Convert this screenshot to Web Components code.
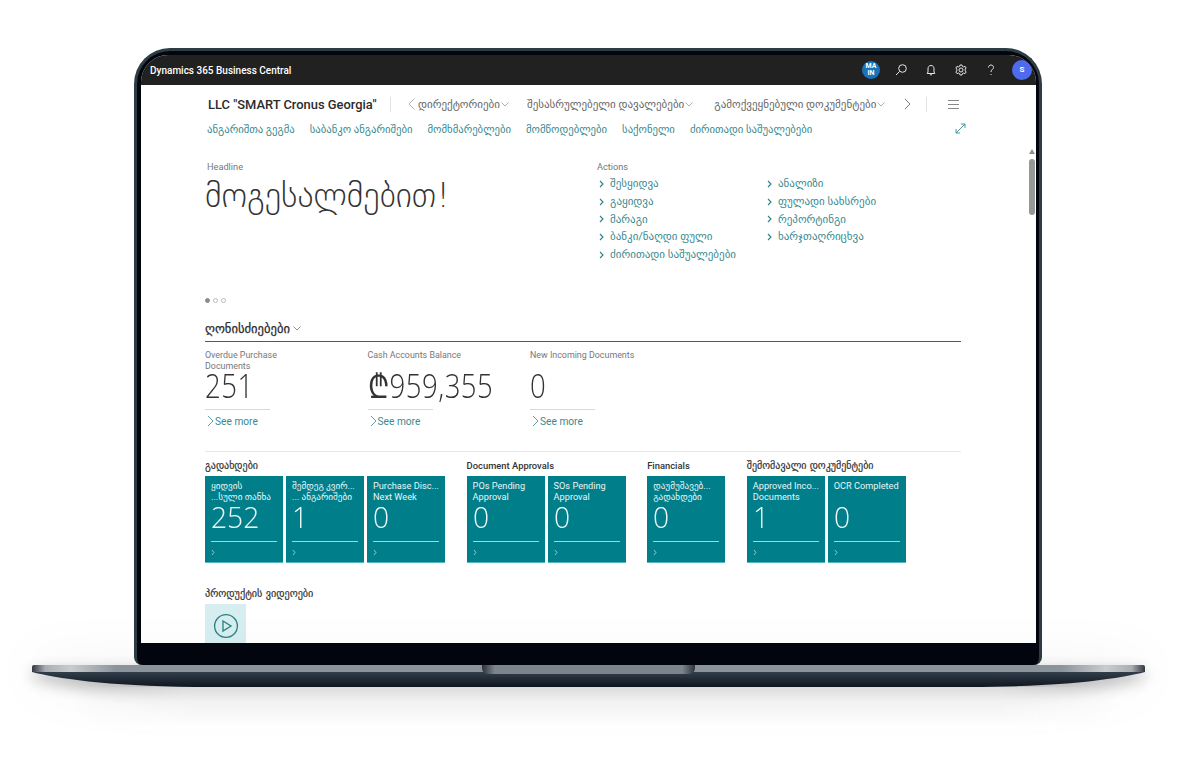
<!DOCTYPE html>
<html lang="ka">
<head>
<meta charset="utf-8">
<title>Business Central</title>
<style>
  html, body { margin: 0; background: #fff; }
  body { font-family: "Open Sans", "DejaVu Sans", sans-serif; width: 1188px; height: 768px; overflow: hidden; }
</style>
</head>
<body>
<bc-laptop>
  <bc-topbar></bc-topbar>
  <bc-nav></bc-nav>
  <bc-headline></bc-headline>
  <bc-activities></bc-activities>
</bc-laptop>

<script>
const GE = `"Roboto", "DejaVu Sans", sans-serif`;
const TEAL = "#3a8a90";

const isGeorgian = (s) => /[\u10A0-\u10FF]/.test(s);

const chevron = (w, h, color, sw) =>
    `<svg width="${w}" height="${h}" viewBox="0 0 ${w} ${h}" fill="none" stroke="${color}" stroke-width="${sw}"><path d="M1 1 L${w - 1} ${h / 2} L1 ${h - 1}"/></svg>`;
const chevronDown = (color) =>
    `<svg width="8" height="5" viewBox="0 0 8 5" fill="none" stroke="${color}" stroke-width=".8"><path d="M.5 .5 L4 4 L7.5 .5"/></svg>`;

// Laptop body: lid with the screen slotted in it, base drawn below
class BcLaptop extends HTMLElement {
    constructor() {
        super();
        this.attachShadow({ mode: "open" });
        this.shadowRoot.innerHTML = `
            <style>
                :host { display: block; padding-top: 48px; position: relative; }
                .lid {
                    box-sizing: border-box;
                    width: 908px;
                    height: 617px;
                    margin-left: 134px;
                    padding: 4px 3px 22px 4px;
                    background: #03060f;
                    border: 3px solid #2e3c44;
                    border-bottom: 0;
                    border-radius: 36px 36px 8px 8px;
                }
                .screen {
                    position: relative;
                    height: 588px;
                    background: #fff;
                    border-radius: 27px 27px 0 0;
                    overflow: hidden;
                }
                .thumb {
                    position: absolute;
                    right: 1px;
                    top: 104px;
                    width: 6px;
                    height: 56px;
                    border-radius: 3px;
                    background: #979797;
                }
                .arrow {
                    position: absolute;
                    right: 1px;
                    top: 94px;
                    width: 0;
                    height: 0;
                    border: 3px solid transparent;
                    border-bottom: 5px solid #8f8f8f;
                    border-top: 0;
                }
                .base {
                    display: block;
                    margin-left: 32px;
                    filter: drop-shadow(0 6px 8px rgba(0,0,0,.3)) drop-shadow(0 0 26px rgba(0,0,0,.07));
                }
                .glow {
                    height: 42px;
                    background: linear-gradient(#dcdcdc, #f2f2f2 35%, #fff);
                    -webkit-mask-image: linear-gradient(to right, transparent 6%, #000 16%, #000 84%, transparent 94%);
                    mask-image: linear-gradient(to right, transparent 6%, #000 16%, #000 84%, transparent 94%);
                }
            </style>
            <div class="lid">
                <div class="screen">
                    <slot></slot>
                    <div class="arrow"></div>
                    <div class="thumb"></div>
                </div>
            </div>
            <svg class="base" width="1113" height="22" viewBox="0 0 1113 22">
                <defs>
                    <linearGradient id="band" x1="0" x2="1" y1="0" y2="0">
                        <stop offset="0" stop-color="#30363d"/>
                        <stop offset=".012" stop-color="#a9aeb2"/>
                        <stop offset=".035" stop-color="#c9cccf"/>
                        <stop offset=".075" stop-color="#8c949b"/>
                        <stop offset=".925" stop-color="#8c949b"/>
                        <stop offset=".965" stop-color="#c9cccf"/>
                        <stop offset=".988" stop-color="#a9aeb2"/>
                        <stop offset="1" stop-color="#30363d"/>
                    </linearGradient>
                    <linearGradient id="under" x1="0" x2="0" y1="0" y2="1">
                        <stop offset="0" stop-color="#313e4a"/>
                        <stop offset="1" stop-color="#0f1620"/>
                    </linearGradient>
                    <linearGradient id="notch" x1="0" x2="1" y1="0" y2="0">
                        <stop offset="0" stop-color="#2c3239"/>
                        <stop offset=".06" stop-color="#7d858c"/>
                        <stop offset=".94" stop-color="#7d858c"/>
                        <stop offset="1" stop-color="#2c3239"/>
                    </linearGradient>
                </defs>
                <path d="M0 7 H1113 C1090 13 1040 21 950 22 H163 C73 21 23 13 0 7Z" fill="url(#under)"/>
                <path d="M2 0 H1111 Q1113 0 1113 2 V7 H0 V2 Q0 0 2 0Z" fill="url(#band)"/>
                <path d="M450 0 H663 V3 Q663 9 655 9 H458 Q450 9 450 3Z" fill="url(#notch)"/>
            </svg>
            <div class="glow"></div>`;
    }
}

// Black title bar with product name and the app icons
class BcTopbar extends HTMLElement {
    constructor() {
        super();
        this.attachShadow({ mode: "open" });
        this.shadowRoot.innerHTML = `
            <style>
                :host {
                    display: flex;
                    align-items: center;
                    height: 30px;
                    background: #212121;
                    color: #fff;
                    padding-left: 9px;
                    padding-right: 4px;
                }
                .name { font: 500 10px "Roboto", sans-serif; flex: 1; }
                .icons { display: flex; align-items: center; gap: 14px; }
                .icons svg { display: block; width: 16px; height: 16px; fill: none; stroke: #e6e6e6; stroke-width: 1; }
                .ma {
                    width: 18px; height: 18px; border-radius: 50%;
                    background: #1a73b8;
                    font: 700 7px/7px "Roboto", sans-serif;
                    text-align: center;
                    display: flex; align-items: center; justify-content: center;
                    margin-right: -1px;
                }
                .user {
                    width: 20px; height: 20px; border-radius: 50%;
                    background: #4f6bed;
                    font: 700 8px/20px "Roboto", sans-serif;
                    text-align: center;
                    margin-left: -1px;
                }
            </style>
            <div class="name">Dynamics 365 Business Central</div>
            <div class="icons">
                <div class="ma">MA<br>IN</div>
                <svg viewBox="0 0 16 16"><circle cx="9.5" cy="6.5" r="3.8"/><path d="M6.7 9.3 L3 13"/></svg>
                <svg viewBox="0 0 16 16"><path d="M8 3.5 C5.8 3.5 5 5 5 7 V10 L4.2 11.5 H11.8 L11 10 V7 C11 5 10.2 3.5 8 3.5Z"/><path d="M7 12.8 H9"/></svg>
                <svg viewBox="0 0 16 16"><circle cx="8" cy="8" r="2"/><path d="M7 3 H9 L9.4 4.4 L10.7 5 L12 4.3 L13.2 6 L12.2 7 V8.9 L13.2 10 L12 11.7 L10.7 11 L9.4 11.6 L9 13 H7 L6.6 11.6 L5.3 11 L4 11.7 L2.8 10 L3.8 8.9 V7 L2.8 6 L4 4.3 L5.3 5 L6.6 4.4Z"/></svg>
                <svg viewBox="0 0 16 16"><path d="M5.5 5.5 C5.5 3.8 6.7 3 8 3 C9.4 3 10.5 3.9 10.5 5.3 C10.5 7.4 8 7.4 8 10"/><path d="M8 12 V13"/></svg>
                <div class="user">S</div>
            </div>`;
    }
}

// Company name with the two menu rows
class BcNav extends HTMLElement {
    constructor() {
        super();
        this.attachShadow({ mode: "open" });
        this.shadowRoot.innerHTML = `
            <style>
                :host { display: block; padding: 8px 0 0 67px; }
                .row1 { display: flex; align-items: center; height: 22px; color: #666; }
                .title { font: 500 12.9px "Roboto", sans-serif; color: #2b2b2b; width: 182px; white-space: nowrap; }
                .sep { width: 1px; height: 15px; background: #e2e2e2; }
                .back { margin: 0 3px 0 17px; display: flex; }
                .item { font: 11px ${GE}; display: flex; align-items: center; gap: 1px; white-space: nowrap; }
                .item + .item { margin-left: 18px; }
                .item + .item + .item { margin-left: 21px; }
                .next { margin: 0 15px 0 19px; display: flex; }
                .burger { margin-left: 21px; width: 11px; height: 7px; border-top: 1px solid #888; border-bottom: 1px solid #888; position: relative; }
                .burger::after { content: ""; position: absolute; left: 0; right: 0; top: 3px; border-top: 1px solid #888; }
                .row2 { display: flex; align-items: center; gap: 15px; height: 17px; margin: 6px 70px 0 -1px; font: 10.7px ${GE}; color: ${TEAL}; white-space: nowrap; }
                .row2 svg { margin-left: auto; margin-top: -2px; }
            </style>
            <div class="row1">
                <div class="title">LLC "SMART Cronus Georgia"</div>
                <div class="sep"></div>
                <div class="back"><svg width="7" height="12" viewBox="0 0 7 12" fill="none" stroke="#aaa" stroke-width=".9"><path d="M6.5 .5 L1 6 L6.5 11.5"/></svg></div>
                <div class="item">დირექტორიები ${chevronDown("#999")}</div>
                <div class="item">შესასრულებელი დავალებები ${chevronDown("#999")}</div>
                <div class="item">გამოქვეყნებული დოკუმენტები ${chevronDown("#999")}</div>
                <div class="next">${chevron(7, 12, "#666", .9)}</div>
                <div class="sep"></div>
                <div class="burger"></div>
            </div>
            <div class="row2">
                <span>ანგარიშთა გეგმა</span>
                <span>საბანკო ანგარიშები</span>
                <span>მომხმარებლები</span>
                <span>მომწოდებლები</span>
                <span>საქონელი</span>
                <span>ძირითადი საშუალებები</span>
                <svg width="11" height="11" viewBox="0 0 11 11" fill="none" stroke="${TEAL}" stroke-width=".9"><path d="M1 10 L10 1 M6 1 H10 V5 M1 6 V10 H5"/></svg>
            </div>`;
    }
}

// Headline part with the greeting on the left and action links on the right
class BcHeadline extends HTMLElement {
    constructor() {
        super();
        this.attachShadow({ mode: "open" });
        const link = (t) => `<div class="link">${chevron(5, 8, "#2f8288", 1.1)}<span>${t}</span></div>`;
        this.shadowRoot.innerHTML = `
            <style>
                :host { display: flex; height: 180px; padding: 22px 0 0 64px; box-sizing: border-box; position: relative; }
                .left { width: 392px; }
                .cap { font: 9.2px/13px "Roboto", sans-serif; color: #777; margin-left: 2px; height: 13px; }
                .hello { font: 200 34.3px/38px "DejaVu Sans", sans-serif; color: #333; margin-top: 3px; white-space: nowrap; }
                .dots { position: absolute; left: 64px; top: 160px; display: flex; gap: 3px; }
                .dots i { width: 5px; height: 5px; box-sizing: border-box; border-radius: 50%; border: 1px solid #bbb; }
                .dots i:first-child { background: #8a8a8a; border-color: #8a8a8a; }
                .cols { display: flex; margin-top: 2px; margin-left: 2px; }
                .col { width: 168px; }
                .link { display: flex; align-items: center; gap: 6px; height: 17.7px; font: 11px ${GE}; color: ${TEAL}; white-space: nowrap; }
            </style>
            <div class="left">
                <div class="cap">Headline</div>
                <div class="hello">მოგესალმებით!</div>
                <div class="dots"><i></i><i></i><i></i></div>
            </div>
            <div>
                <div class="cap" style="margin-left:0">Actions</div>
                <div class="cols">
                    <div class="col">
                        ${link("შესყიდვა")}${link("გაყიდვა")}${link("მარაგი")}${link("ბანკი/ნაღდი ფული")}${link("ძირითადი საშუალებები")}
                    </div>
                    <div class="col">
                        ${link("ანალიზი")}${link("ფულადი სახსრები")}${link("რეპორტინგი")}${link("ხარჯთაღრიცხვა")}
                    </div>
                </div>
            </div>`;
    }
}

// One KPI: caption, big number, short rule, See more
class BcCue extends HTMLElement {
    constructor() {
        super();
        this.attachShadow({ mode: "open" });
        this.shadowRoot.innerHTML = `
            <style>
                :host { display: block; width: 162.5px; }
                .cap { font: 8.9px/11px "Roboto", sans-serif; color: #777; height: 22px; width: 90px; white-space: normal; }
                :host([wide]) .cap { width: 140px; }
                .num { font: 300 30px/28px "Open Sans", "DejaVu Sans", sans-serif; letter-spacing: .5px; color: #333; white-space: nowrap; transform: scale(.92, 1.12); transform-origin: left center; }
                .rule { width: 65px; border-top: 1px solid #d9d9d9; margin-top: 9px; }
                .more { display: flex; align-items: center; gap: 1px; height: 22px; margin-left: 2px; font: 10.2px "Roboto", sans-serif; color: ${TEAL}; }
            </style>
            <div class="cap">${this.getAttribute("label")}</div>
            <div class="num">${this.getAttribute("value")}</div>
            <div class="rule"></div>
            <div class="more">${chevron(7, 12, "#3a8a90", .8)}<span>See more</span></div>`;
    }
}

// Teal tile
class BcTile extends HTMLElement {
    constructor() {
        super();
        this.attachShadow({ mode: "open" });
        const label = this.getAttribute("label");
        const lines = label.split("|");
        this.shadowRoot.innerHTML = `
            <style>
                :host {
                    display: block;
                    box-sizing: border-box;
                    width: 78px;
                    height: 87px;
                    padding: 5px 6px 0;
                    background: #007f8b;
                    border-bottom: 1px solid #55b6bf;
                    color: #e6f6f7;
                }
                .lab { font: 9.2px/10.5px ${GE}; height: 21px; white-space: nowrap; }
                .num { font: 300 30px/30px "Open Sans", sans-serif; color: #eefafa; height: 30px; transform: scaleX(.94); transform-origin: left center; }
                .rule { border-top: 1px solid #9fd8dc; margin-top: 9px; }
                .go { margin-top: 7px; display: flex; }
            </style>
            <div class="lab">${lines.join("<br>")}</div>
            <div class="num">${this.getAttribute("value")}</div>
            <div class="rule"></div>
            <div class="go">${chevron(4, 7, "#a8dde0", .8)}</div>`;
    }
}

// Titled group of tiles
class BcTileGroup extends HTMLElement {
    constructor() {
        super();
        this.attachShadow({ mode: "open" });
        const title = this.getAttribute("title");
        this.shadowRoot.innerHTML = `
            <style>
                :host { display: block; }
                .t { font: 500 9.4px/14px "Roboto", sans-serif; color: #333; height: 14px; margin-bottom: 3px; white-space: nowrap; }
                .t.ge { font: 400 10px/14px "DejaVu Sans", sans-serif; -webkit-text-stroke: .2px #333; }
                .tiles { display: flex; gap: 3px; }
            </style>
            <div class="t ${isGeorgian(title) ? "ge" : ""}">${title}</div>
            <div class="tiles"><slot></slot></div>`;
    }
}

// Lower part of the role center
class BcActivities extends HTMLElement {
    constructor() {
        super();
        this.attachShadow({ mode: "open" });
        this.shadowRoot.innerHTML = `
            <style>
                :host { display: block; padding: 0 75px 0 64px; }
                .head { display: flex; align-items: center; gap: 3px; height: 20px; font: 400 12.6px "DejaVu Sans", sans-serif; -webkit-text-stroke: .25px #2b2b2b; color: #2b2b2b; border-bottom: 1px solid #55566c; padding-bottom: 3px; }
                .cues { display: flex; padding-top: 8px; height: 101px; border-bottom: 1px solid #e6e6e6; }
                .groups { display: flex; gap: 21.6px; padding-top: 7px; }
                .vid { margin-top: 24px; }
                .vid .t { font: 400 10.2px/14px "DejaVu Sans", sans-serif; -webkit-text-stroke: .2px #333; color: #333; }
                .thumb { width: 41px; height: 42px; margin-top: 3px; padding-top: 1px; box-sizing: border-box; background: #d6eef0; display: flex; align-items: center; justify-content: center; }
            </style>
            <div class="head">ღონისძიებები ${chevronDown("#777")}</div>
            <div class="cues">
                <bc-cue label="Overdue Purchase Documents" value="251"></bc-cue>
                <bc-cue label="Cash Accounts Balance" value="₾959,355" wide></bc-cue>
                <bc-cue label="New Incoming Documents" value="0" wide></bc-cue>
            </div>
            <div class="groups">
                <bc-tile-group title="გადახდები">
                    <bc-tile label="ყიდვის|...სული თანხა" value="252"></bc-tile>
                    <bc-tile label="შემდეგ კვირ...|... ანგარიშები" value="1"></bc-tile>
                    <bc-tile label="Purchase Disc...|Next Week" value="0"></bc-tile>
                </bc-tile-group>
                <bc-tile-group title="Document Approvals">
                    <bc-tile label="POs Pending|Approval" value="0"></bc-tile>
                    <bc-tile label="SOs Pending|Approval" value="0"></bc-tile>
                </bc-tile-group>
                <bc-tile-group title="Financials">
                    <bc-tile label="დაუმუშავებ...|გადახდები" value="0"></bc-tile>
                </bc-tile-group>
                <bc-tile-group title="შემომავალი დოკუმენტები">
                    <bc-tile label="Approved Inco...|Documents" value="1"></bc-tile>
                    <bc-tile label="OCR Completed" value="0"></bc-tile>
                </bc-tile-group>
            </div>
            <div class="vid">
                <div class="t">პროდუქტის ვიდეოები</div>
                <div class="thumb">
                    <svg width="26" height="26" viewBox="0 0 26 26" fill="none" stroke="#2a7f85" stroke-width="1.3"><circle cx="13" cy="13" r="11.4"/><path d="M10 8 L18 13 L10 18Z"/></svg>
                </div>
            </div>`;
    }
}

customElements.define("bc-laptop", BcLaptop);
customElements.define("bc-topbar", BcTopbar);
customElements.define("bc-nav", BcNav);
customElements.define("bc-headline", BcHeadline);
customElements.define("bc-cue", BcCue);
customElements.define("bc-tile", BcTile);
customElements.define("bc-tile-group", BcTileGroup);
customElements.define("bc-activities", BcActivities);
</script>
</body>
</html>
